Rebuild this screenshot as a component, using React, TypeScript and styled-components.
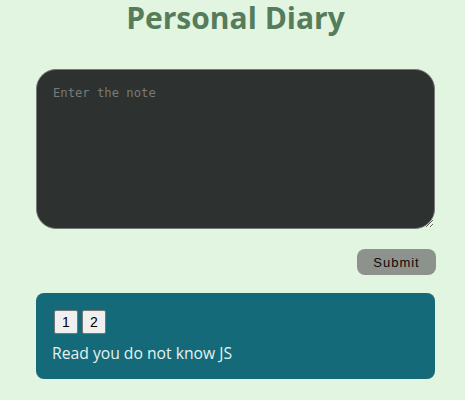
import { createGlobalStyle, styled } from 'styled-components';

const GlobalStyle = createGlobalStyle`
  html, body {
    margin: 0;
    padding: 0;
    background-color: #e1f5e0;
  }
`;

const notes = ['Read you do not know JS'];

export default function App() {
  return (
    <>
      <GlobalStyle />
      <Root>
        <Title>Personal Diary</Title>
        <NoteInput placeholder="Enter the note" />
        <Actions>
          <SubmitButton>Submit</SubmitButton>
        </Actions>
        {notes.map(note => (
          <NoteCard key={note}>
            <Pager>
              <PageButton>1</PageButton>
              <PageButton>2</PageButton>
            </Pager>
            <NoteText>{note}</NoteText>
          </NoteCard>
        ))}
      </Root>
    </>
  );
}

const Root = styled.div`
  width: 399px;
  margin-left: 36px;
  padding-top: 1px;
  display: flex;
  flex-direction: column;
`;

const Title = styled.h1`
  margin: 0;
  height: 35px;
  text-align: center;
  color: #557c5b;
  font-family: 'Open Sans', sans-serif;
  font-size: 30px;
  font-weight: 700;
  line-height: 34px;
`;

const NoteInput = styled.textarea`
  box-sizing: border-box;
  margin-top: 33px;
  width: 399px;
  height: 160px;
  padding: 16px;
  resize: vertical;
  background-color: #2d3130;
  color: #ddd;
  border: 1px solid #777;
  border-radius: 20px;
  outline: none;
  font-family: 'DejaVu Sans Mono', monospace;
  font-size: 12.2px;
  caret-color: #9fe09f;
  &::placeholder {
    color: #777a78;
  }
`;

const Actions = styled.div`
  display: flex;
  justify-content: flex-end;
  margin-top: 20px;
`;

const SubmitButton = styled.button`
  width: 79px;
  height: 26px;
  margin-right: -1px;
  border: none;
  border-radius: 8px;
  background-color: #8e928d;
  color: #0a0a0a;
  font-family: 'Liberation Sans', Arial, sans-serif;
  font-size: 13px;
  letter-spacing: 1px;
  cursor: pointer;
`;

const NoteCard = styled.div`
  margin-top: 18px;
  padding: 17px 16px 16px 18px;
  border-radius: 8px;
  background-color: #156a79;
`;

const Pager = styled.div`
  display: flex;
  gap: 4px;
`;

const PageButton = styled.button`
  width: 24px;
  height: 24px;
  padding: 0;
  border: 1px solid #767676;
  border-radius: 2px;
  background-color: #efefef;
  color: #000;
  font-family: 'Liberation Sans', Arial, sans-serif;
  font-size: 14px;
`;

const NoteText = styled.p`
  margin: 9px 0 0 -2px;
  color: #e6f2f0;
  font-family: 'Open Sans', sans-serif;
  font-size: 15.7px;
  line-height: 20px;
`;
